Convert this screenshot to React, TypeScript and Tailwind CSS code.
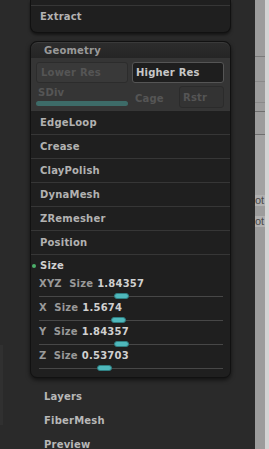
import React from "react";

const font = { fontFamily: '"DejaVu Sans", "Liberation Sans", sans-serif' };

function Row({ label }: { label: string }) {
  return (
    <div className="h-[24px] border-t border-[#363636] flex items-center pl-[9px] text-[10px] font-bold tracking-[0.2px] text-[#b2b2b2]">
      {label}
    </div>
  );
}

function SliderBlock({ name, value, pos }: { name: string; value: string; pos: number }) {
  return (
    <div className="h-[24px] flex flex-col pl-[8px] pr-[7px]">
      <div className="h-[16px] flex items-end pb-[1px] text-[10px] font-bold tracking-[0.2px] whitespace-pre">
        <span className="text-[#999]">{name}</span>
        <span className="text-[#d0d0d0] ml-[4px]">{value}</span>
      </div>
      <div className="relative h-[8px] flex items-center">
        <div className="h-px w-full bg-[#474747]" />
        <div
          className="absolute top-[1px] h-[6px] w-[15px] rounded-full bg-[#4fb8bc] border border-[#2f7f82]"
          style={{ left: pos }}
        />
      </div>
    </div>
  );
}

export default function App() {
  return (
    <div className="w-[269px] h-[449px] overflow-hidden flex bg-[#2a2a2a]" style={font}>
      <div className="flex-1 relative">
        <div className="absolute left-0 top-[345px] w-[3px] h-[80px] bg-[#303030]" />
        {/* top panel */}
        <div className="ml-[30px] w-[201px] h-[33px] bg-[#1f1f1f] border border-t-0 border-[#111] rounded-b-[7px] shadow-[0_2px_3px_rgba(0,0,0,0.5)] flex flex-col">
          <div className="h-[5px]" />
          <div className="border-t border-[#363636] h-[21px] flex items-center pl-[9px] text-[10px] font-bold tracking-[0.2px] text-[#b2b2b2]">
            Extract
          </div>
        </div>

        {/* geometry panel */}
        <div className="ml-[30px] mt-[8px] w-[201px] h-[337px] bg-[#1f1f1f] border border-[#111] rounded-[7px] shadow-[0_2px_4px_rgba(0,0,0,0.6)] overflow-hidden flex flex-col">
          <div className="h-[16px] bg-gradient-to-b from-[#2c2c2c] to-[#252525] border-t border-[#3a3a3a] rounded-t-[7px] flex items-center pl-[13px] text-[10px] font-bold tracking-[0.2px] text-[#999]">
            Geometry
          </div>
          <div className="h-[52px] bg-[#353535] px-[5px] pt-[4px] flex flex-col gap-[3px]">
            <div className="flex gap-[4px]">
              <div className="w-[92px] h-[21px] rounded-[3px] bg-[#393939] border border-[#2c2c2c] flex items-center pl-[4px] text-[10px] font-bold tracking-[0.2px] text-[#555]">
                Lower Res
              </div>
              <div className="w-[92px] h-[21px] rounded-[3px] bg-[#1e1e1e] border border-[#555] flex items-center pl-[3px] text-[10px] font-bold tracking-[0.2px] text-[#c8c8c8]">
                Higher Res
              </div>
            </div>
            <div className="flex gap-[4px]">
              <div className="w-[92px] h-[22px] flex flex-col">
                <div className="pl-[2px] text-[10px] font-bold tracking-[0.2px] text-[#555] leading-[14px]">SDiv</div>
                <div className="mt-[1px] h-[5px] rounded-full bg-[#3d6b68]" />
              </div>
              <div className="w-[43px] flex items-center pl-[3px] pt-[2px] text-[10px] font-bold tracking-[0.2px] text-[#555]">Cage</div>
              <div className="w-[45px] h-[22px] rounded-[3px] bg-[#333] border border-[#2b2b2b] flex items-center pl-[3px] text-[10px] font-bold tracking-[0.2px] text-[#555]">
                Rstr
              </div>
            </div>
          </div>
          <Row label="EdgeLoop" />
          <Row label="Crease" />
          <Row label="ClayPolish" />
          <Row label="DynaMesh" />
          <Row label="ZRemesher" />
          <Row label="Position" />
          <div className="h-[22px] border-t border-[#363636] flex items-center pl-[1px] text-[10px] font-bold tracking-[0.2px] text-[#d0d0d0]">
            <div className="w-[4px] h-[4px] rounded-full bg-[#4caf6a] mr-[4px]" />
            Size
          </div>
          <SliderBlock name={"XYZ  Size"} value="1.84357" pos={75} />
          <SliderBlock name={"X  Size"} value="1.5674" pos={72} />
          <SliderBlock name={"Y  Size"} value="1.84357" pos={75} />
          <SliderBlock name={"Z  Size"} value="0.53703" pos={58} />
        </div>

        <div className="ml-[44px] mt-[6px] flex flex-col">
          <div className="h-[24px] flex items-center text-[10px] font-bold tracking-[0.2px] text-[#b8b8b8]">Layers</div>
          <div className="h-[24px] flex items-center text-[10px] font-bold tracking-[0.2px] text-[#b8b8b8]">FiberMesh</div>
          <div className="h-[24px] flex items-center text-[10px] font-bold tracking-[0.2px] text-[#b8b8b8]">Preview</div>
        </div>
      </div>

      {/* right strip */}
      <div className="w-[10px] bg-[#9c9c9c] flex flex-col">
        <div className="h-[57px] border-b border-[#7a7a7a]" />
        <div className="h-[25px] border-b border-[#8a8a8a]" />
        <div className="h-[21px] border-b border-[#8a8a8a]" />
        <div className="h-[9px] border-b border-[#6e6e6e]" />
        <div className="h-[23px] border-b border-[#6e6e6e]" />
        <div className="h-[60px] bg-[#a2a2a2]" />
        <div className="h-[11px] bg-[#b0b0b0] text-[11px] leading-[11px] text-[#4a4a4a] overflow-hidden whitespace-nowrap" style={{ fontFamily: '"Liberation Sans", sans-serif' }}>ot</div>
        <div className="h-[10px]" />
        <div className="h-[11px] bg-[#b0b0b0] text-[11px] leading-[11px] text-[#4a4a4a] overflow-hidden whitespace-nowrap" style={{ fontFamily: '"Liberation Sans", sans-serif' }}>ot</div>
        <div className="flex-1" />
      </div>
      <div className="w-[4px] bg-[#d4d4d4]" />
    </div>
  );
}
